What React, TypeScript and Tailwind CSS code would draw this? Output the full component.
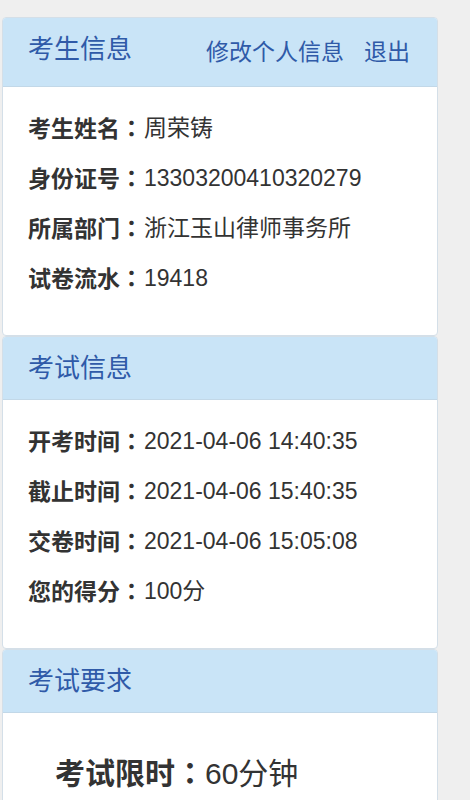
const font = "font-['Liberation_Sans','Noto_Sans_CJK_SC',sans-serif]";
const colon = "font-['Noto_Sans_CJK_TC',sans-serif]";

type Row = { label: string; value: string };

const student: Row[] = [
  { label: "考生姓名", value: "周荣铸" },
  { label: "身份证号", value: "13303200410320279" },
  { label: "所属部门", value: "浙江玉山律师事务所" },
  { label: "试卷流水", value: "19418" },
];

const exam: Row[] = [
  { label: "开考时间", value: "2021-04-06 14:40:35" },
  { label: "截止时间", value: "2021-04-06 15:40:35" },
  { label: "交卷时间", value: "2021-04-06 15:05:08" },
  { label: "您的得分", value: "100分" },
];

function InfoRows({ rows }: { rows: Row[] }) {
  return (
    <div className="px-[25px] pt-[16px] pb-[32px]">
      {rows.map((r) => (
        <div key={r.label} className="h-[50px] flex items-center text-[23px] text-[#333]">
          <span className="font-bold">
            {r.label}
            <span className={colon}>：</span>
          </span>
          <span className="ml-[1px]">{r.value}</span>
        </div>
      ))}
    </div>
  );
}

function Panel({
  title,
  tall,
  links,
  children,
}: {
  title: string;
  tall?: boolean;
  links?: boolean;
  children: React.ReactNode;
}) {
  return (
    <div className="border border-[#d4dfe8] rounded-[4px] bg-white overflow-hidden">
      <div
        className={`flex items-start justify-between bg-[#c9e4f7] border-b border-[#c2d8e8] px-[25px] ${
          tall ? "h-[69px]" : "h-[63px]"
        }`}
      >
        <span className="text-[26px] leading-none text-[#2f5aa8] mt-[18px]">{title}</span>
        {links && (
          <div className="flex gap-[20px] mt-[23px] mr-[2px] text-[23px] leading-none text-[#2f5aa8]">
            <a>修改个人信息</a>
            <a>退出</a>
          </div>
        )}
      </div>
      {children}
    </div>
  );
}

export default function App() {
  return (
    <div className={`min-h-screen bg-[#efefef] pt-[17px] pl-[2px] ${font}`}>
      <div className="w-[436px]">
        <Panel title="考生信息" tall links>
          <InfoRows rows={student} />
        </Panel>
        <Panel title="考试信息">
          <InfoRows rows={exam} />
        </Panel>
        <Panel title="考试要求">
          <div className="px-[52px] pt-[41px] pb-[40px] text-[30px] leading-[34px] text-[#333]">
            <span className="font-bold">
              考试限时<span className={colon}>：</span>
            </span>
            <span>60分钟</span>
          </div>
        </Panel>
      </div>
    </div>
  );
}
